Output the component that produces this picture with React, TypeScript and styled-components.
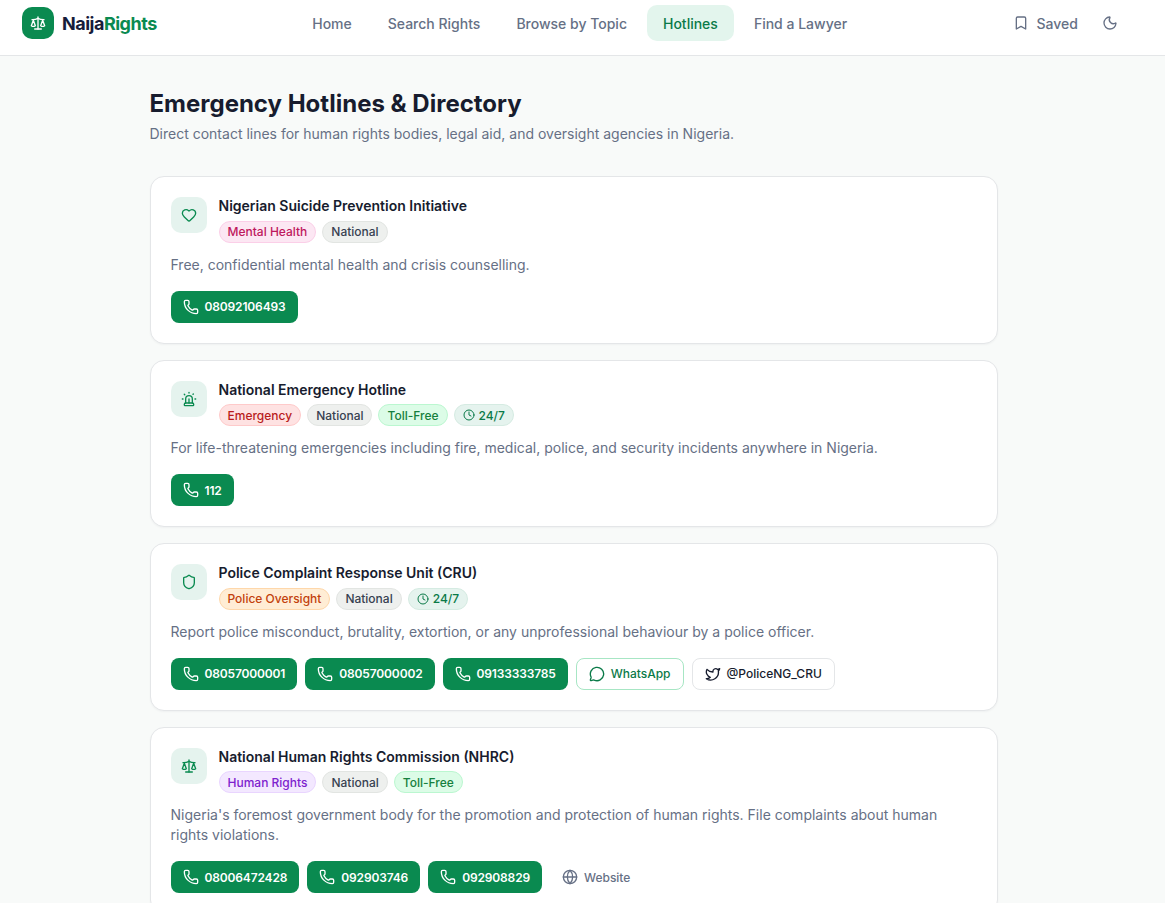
import React from "react";
import styled, { createGlobalStyle } from "styled-components";
import { Scale, Heart, Siren, Shield, Clock, Phone, MessageCircle, Twitter, Globe, Bookmark, Moon } from "lucide-react";

const Global = createGlobalStyle`
  * { box-sizing: border-box; }
  html, body { margin: 0; padding: 0; background: #f8faf9; }
  body { font-family: Inter, "Noto Sans", sans-serif; color: #171c2e; }
`;

const Header = styled.header`
  height: 56px;
  background: #fff;
  border-bottom: 1px solid #e4e6e8;
  display: flex;
  align-items: center;
  justify-content: space-between;
  padding: 0 37px 9px 22px;
`;
const Brand = styled.div`
  display: flex;
  align-items: center;
  gap: 8px;
  margin-right: 2px;
`;
const LogoMark = styled.div`
  width: 32px;
  height: 32px;
  border-radius: 10px;
  background: #0a8a50;
  color: #fff;
  display: flex;
  align-items: center;
  justify-content: center;
`;
const BrandText = styled.span`
  font-size: 18px;
  font-weight: 700;
  letter-spacing: -0.5px;
  color: #171c3a;
  span { color: #0a8a50; }
`;
const Nav = styled.nav`
  display: flex;
  align-items: center;
  gap: 4px;
`;
const NavItem = styled.a<{ $active?: boolean }>`
  height: 36px;
  padding: 0 16px;
  border-radius: 10px;
  display: flex;
  align-items: center;
  font-size: 14px;
  font-weight: 500;
  color: ${(p) => (p.$active ? "#0a7a48" : "#667085")};
  background: ${(p) => (p.$active ? "#e3f5ed" : "transparent")};
`;
const HeaderActions = styled.div`
  display: flex;
  align-items: center;
  gap: 2px;
`;
const SavedButton = styled.button`
  height: 36px;
  padding: 0 12px;
  border: 0;
  background: none;
  display: flex;
  align-items: center;
  gap: 8px;
  font: 500 14px Inter, sans-serif;
  color: #667085;
`;
const IconButton = styled.button`
  width: 36px;
  height: 36px;
  border: 0;
  background: none;
  display: flex;
  align-items: center;
  justify-content: center;
  color: #667085;
  padding: 0;
`;
const Main = styled.main`
  width: 848.5px;
  margin: 0 0 0 149.5px;
  padding: 32px 0;
`;
const Title = styled.h1`
  margin: 0;
  font-size: 24px;
  line-height: 32px;
  font-weight: 700;
  color: #171c2e;
`;
const Subtitle = styled.p`
  margin: 4px 0 32px;
  font-size: 14px;
  line-height: 20px;
  color: #667085;
`;
const CardList = styled.div`
  display: flex;
  flex-direction: column;
  gap: 16px;
`;
const Card = styled.article`
  background: #fff;
  border: 1px solid #e4e6e8;
  border-radius: 14px;
  padding: 20px;
  box-shadow: 0 1px 2px rgba(16, 24, 40, 0.04);
`;
const CardHead = styled.div`
  display: flex;
  gap: 12px;
  align-items: flex-start;
`;
const IconTile = styled.div`
  width: 36px;
  height: 36px;
  flex: none;
  border-radius: 10px;
  background: #e5f3ee;
  color: #0a8a50;
  display: flex;
  align-items: center;
  justify-content: center;
`;
const CardName = styled.h2`
  margin: 0;
  font-size: 14px;
  line-height: 17.5px;
  font-weight: 600;
  color: #171c2e;
`;
const Tags = styled.div`
  display: flex;
  gap: 6px;
  margin-top: 6px;
`;
const tagColors = {
  pink: ["#fce7f3", "#fbcfe8", "#be185d"],
  gray: ["#eef0ee", "#e2e5e2", "#374151"],
  red: ["#fee2e2", "#fecaca", "#b91c1c"],
  green: ["#dcfce7", "#bbf7d0", "#15803d"],
  mint: ["#e5f3ee", "#d5ebe2", "#0a7a48"],
  orange: ["#ffedd5", "#fed7aa", "#c2410c"],
  purple: ["#f3e8ff", "#e9d5ff", "#7e22ce"],
};
type TagTone = keyof typeof tagColors;
const Tag = styled.span<{ $tone: TagTone }>`
  height: 22px;
  padding: 0 8px;
  border-radius: 999px;
  display: inline-flex;
  align-items: center;
  gap: 4px;
  font-size: 12px;
  font-weight: 500;
  background: ${(p) => tagColors[p.$tone][0]};
  border: 1px solid ${(p) => tagColors[p.$tone][1]};
  color: ${(p) => tagColors[p.$tone][2]};
`;
const Description = styled.p`
  margin: 12px 0 16px;
  font-size: 14px;
  line-height: 20px;
  color: #667085;
`;
const Actions = styled.div`
  display: flex;
  flex-wrap: wrap;
  gap: 8px;
`;
const CallButton = styled.a`
  height: 32px;
  padding: 0 12px;
  border-radius: 8px;
  background: #0a8a50;
  color: #fff;
  display: inline-flex;
  align-items: center;
  gap: 6px;
  font-size: 12px;
  font-weight: 600;
  letter-spacing: -0.15px;
`;
const OutlineButton = styled.a<{ $green?: boolean }>`
  height: 32px;
  padding: 0 12px;
  border-radius: 8px;
  background: #fff;
  border: 1px solid ${(p) => (p.$green ? "#a7e6c4" : "#e4e6e8")};
  color: ${(p) => (p.$green ? "#0a7a48" : "#171c2e")};
  display: inline-flex;
  align-items: center;
  gap: 6px;
  font-size: 12px;
  font-weight: 500;
`;
const SiteLink = styled.a`
  height: 32px;
  padding: 0 12px;
  color: #667085;
  display: inline-flex;
  align-items: center;
  gap: 6px;
  font-size: 12px;
  font-weight: 500;
`;

const TAG_ICON = <Clock size={12} />;

type Entry = {
  icon: React.ReactNode;
  name: string;
  tags: [TagTone, string, boolean?][];
  desc: string;
  phones: string[];
  extra?: React.ReactNode;
};

const entries: Entry[] = [
  {
    icon: <Heart size={16} />,
    name: "Nigerian Suicide Prevention Initiative",
    tags: [["pink", "Mental Health"], ["gray", "National"]],
    desc: "Free, confidential mental health and crisis counselling.",
    phones: ["08092106493"],
  },
  {
    icon: <Siren size={16} />,
    name: "National Emergency Hotline",
    tags: [["red", "Emergency"], ["gray", "National"], ["green", "Toll-Free"], ["mint", "24/7", true]],
    desc: "For life-threatening emergencies including fire, medical, police, and security incidents anywhere in Nigeria.",
    phones: ["112"],
  },
  {
    icon: <Shield size={16} />,
    name: "Police Complaint Response Unit (CRU)",
    tags: [["orange", "Police Oversight"], ["gray", "National"], ["mint", "24/7", true]],
    desc: "Report police misconduct, brutality, extortion, or any unprofessional behaviour by a police officer.",
    phones: ["08057000001", "08057000002", "09133333785"],
    extra: (
      <>
        <OutlineButton $green><MessageCircle size={16} />WhatsApp</OutlineButton>
        <OutlineButton><Twitter size={16} />@PoliceNG_CRU</OutlineButton>
      </>
    ),
  },
  {
    icon: <Scale size={16} />,
    name: "National Human Rights Commission (NHRC)",
    tags: [["purple", "Human Rights"], ["gray", "National"], ["green", "Toll-Free"]],
    desc: "Nigeria's foremost government body for the promotion and protection of human rights. File complaints about human rights violations.",
    phones: ["08006472428", "092903746", "092908829"],
    extra: <SiteLink><Globe size={16} />Website</SiteLink>,
  },
];

export default function App() {
  return (
    <>
      <Global />
      <Header>
        <Brand>
          <LogoMark><Scale size={16} /></LogoMark>
          <BrandText>Naija<span>Rights</span></BrandText>
        </Brand>
        <Nav>
          <NavItem>Home</NavItem>
          <NavItem>Search Rights</NavItem>
          <NavItem>Browse by Topic</NavItem>
          <NavItem $active>Hotlines</NavItem>
          <NavItem>Find a Lawyer</NavItem>
        </Nav>
        <HeaderActions>
          <SavedButton><Bookmark size={16} />Saved</SavedButton>
          <IconButton><Moon size={16} /></IconButton>
        </HeaderActions>
      </Header>
      <Main>
        <Title>Emergency Hotlines &amp; Directory</Title>
        <Subtitle>Direct contact lines for human rights bodies, legal aid, and oversight agencies in Nigeria.</Subtitle>
        <CardList>
          {entries.map((e) => (
            <Card key={e.name}>
              <CardHead>
                <IconTile>{e.icon}</IconTile>
                <div>
                  <CardName>{e.name}</CardName>
                  <Tags>
                    {e.tags.map(([tone, label, clock]) => (
                      <Tag key={label} $tone={tone}>{clock && TAG_ICON}{label}</Tag>
                    ))}
                  </Tags>
                </div>
              </CardHead>
              <Description>{e.desc}</Description>
              <Actions>
                {e.phones.map((p) => (
                  <CallButton key={p}><Phone size={16} />{p}</CallButton>
                ))}
                {e.extra}
              </Actions>
            </Card>
          ))}
        </CardList>
      </Main>
    </>
  );
}
